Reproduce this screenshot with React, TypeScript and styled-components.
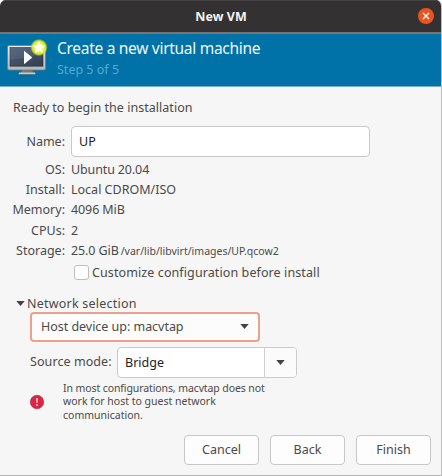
import React from "react";
import styled, { createGlobalStyle } from "styled-components";

const Global = createGlobalStyle`
  * { box-sizing: border-box; }
  body { margin: 0; background: #fff; overflow: hidden; }
`;

const Dialog = styled.main`
  width: 442px;
  height: 476px;
  display: flex;
  flex-direction: column;
  overflow: hidden;
  background: #f6f6f6;
  border-right: 1px solid #bdbdbd;
  border-bottom: 1px solid #b5b5b5;
  border-radius: 6px 6px 0 0;
  font: 12.5px/20px "Noto Sans", "Open Sans", sans-serif;
  color: #4a4a4a;
  white-space: nowrap;
`;

const Text = styled.span<{ $track?: number }>`
  letter-spacing: ${(p) => p.$track ?? 0}px;
`;

const TitleBar = styled.header`
  flex: none;
  width: 442px;
  height: 33px;
  display: grid;
  grid-template-columns: 34px 1fr 34px;
  align-items: center;
  background: #333132;
  border-top: 1px solid #454344;
  border-bottom: 1px solid #77706d;
`;

const Title = styled.h1`
  grid-column: 2;
  margin: 0;
  text-align: center;
  font-size: 12.5px;
  line-height: 20px;
  font-weight: 700;
  color: #f5f4f3;
`;

const Close = styled.button`
  width: 16px;
  height: 16px;
  margin: -2px 0 0 10px;
  padding: 0;
  border: 0;
  border-radius: 50%;
  background: #e95420;
  display: grid;
  place-items: center;
`;

const Banner = styled.section`
  flex: none;
  height: 54px;
  display: flex;
  padding: 6px 0 0 7px;
  gap: 10px;
  background: #0072a8;
  border-top: 1px solid #3b8db3;
  border-bottom: 1px solid #79acc7;
`;

const BannerText = styled.div`
  display: flex;
  flex-direction: column;
`;

const Heading = styled.h2`
  margin: -3px 0 0;
  font-size: 15.5px;
  line-height: 23px;
  font-weight: 400;
  color: #f0f7fa;
`;

const Step = styled.div`
  font-size: 12.5px;
  line-height: 20px;
  color: #55a9d4;
`;

const Body = styled.section`
  flex: 1;
  display: flex;
  flex-direction: column;
  padding: 11px 10px 10px 12px;
`;

const Intro = styled.div`
  padding-left: 1px;
`;

const Details = styled.div`
  display: grid;
  grid-template-columns: 53px 299px;
  column-gap: 6px;
  grid-template-rows: 31px 3px repeat(5, 20.2px);
  margin-top: 8px;
`;

const Key = styled.div<{ $tall?: boolean }>`
  display: flex;
  justify-content: flex-end;
  line-height: ${(p) => (p.$tall ? 31 : 20)}px;
  grid-column: 1;
`;

const Value = styled.div`
  grid-column: 2;
  display: flex;
  gap: 2px;
`;

const Small = styled.span`
  font-size: 10.5px;
`;

const Entry = styled.div`
  height: 31px;
  padding-left: 7px;
  line-height: 29px;
  background: #fff;
  border: 1px solid #c8c8c8;
  border-radius: 4px;
  color: #222;
`;

const Spacer = styled.div`
  grid-column: 1 / -1;
`;

const CheckRow = styled.label`
  display: flex;
  align-items: center;
  gap: 3px;
  height: 20px;
  margin: 2px 0 0 62px;
`;

const CheckBox = styled.span`
  width: 15px;
  height: 15px;
  border: 1px solid #bebebe;
  border-radius: 3px;
  background: #fff;
`;

const Disclosure = styled.div`
  display: flex;
  align-items: center;
  gap: 2px;
  height: 20px;
  margin: 11px 0 0 4px;
`;

const Combo = styled.div`
  display: flex;
  align-items: center;
  justify-content: space-between;
  width: 230px;
  height: 30px;
  margin: -2px 0 0 18px;
  padding: 0 9px;
  background: #fcfcfc;
  border: 2px solid #eba28b;
  border-radius: 4px;
`;

const SourceRow = styled.div`
  display: flex;
  align-items: center;
  justify-content: space-between;
  width: 267px;
  margin: 5px 0 0 18px;
`;

const SplitCombo = styled.div`
  display: flex;
  width: 180px;
  height: 31px;
  line-height: 29px;
  color: #222;
  background: #fff;
  border: 1px solid #cacaca;
  border-radius: 4px;
`;

const SplitText = styled.div`
  flex: 1;
  padding-left: 7px;
`;

const SplitArrow = styled.div`
  width: 32px;
  display: grid;
  place-items: center;
  border-left: 1px solid #d0d0d0;
  background: #fbfbfb;
  border-radius: 0 3px 3px 0;
`;

const Warning = styled.div`
  display: flex;
  align-items: center;
  gap: 19px;
  margin: 4px 0 0 18px;
  font-size: 10.5px;
  line-height: 13.4px;
`;

const WarningLines = styled.div`
  display: flex;
  flex-direction: column;
`;

const Actions = styled.footer`
  display: flex;
  justify-content: flex-end;
  gap: 11px;
  margin-top: auto;
`;

const Button = styled.button`
  width: 75px;
  height: 30px;
  padding: 0;
  font: inherit;
  color: inherit;
  border: 1px solid #c8c8c8;
  border-radius: 4px;
  background: #fdfdfd;
`;

const Arrow = () => (
  <svg width="9" height="5" viewBox="0 0 9 5">
    <path d="M.3 0h8.4L4.5 5z" fill="#424242" />
  </svg>
);

const MachineIcon = () => (
  <svg width="40" height="37" viewBox="0 0 40 37" overflow="visible">
    <defs>
      <linearGradient id="screen" x1="0" y1="0" x2="1" y2="1">
        <stop offset="0" stopColor="#526078" />
        <stop offset="1" stopColor="#303d51" />
      </linearGradient>
      <linearGradient id="frame" x1="0" y1="0" x2="0" y2="1">
        <stop offset="0" stopColor="#eeeeec" />
        <stop offset="1" stopColor="#b5b7b5" />
      </linearGradient>
      <radialGradient id="glow">
        <stop offset=".5" stopColor="#f3f84a" />
        <stop offset=".78" stopColor="#dcea20" stopOpacity=".9" />
        <stop offset="1" stopColor="#a4d030" stopOpacity="0" />
      </radialGradient>
    </defs>
    <ellipse cx="20" cy="34" rx="9.5" ry="2.2" fill="#315a72" />
    <path d="M15 30h10l1 3H14z" fill="#75797b" />
    <path d="M12 32.4h16l.6 1.8H11.4z" fill="#c9cbc9" />
    <rect x=".5" y="5.5" width="38" height="24.5" rx="1.5" fill="url(#frame)" stroke="#777c80" strokeWidth=".8" />
    <rect x="3" y="7.5" width="33" height="18.7" fill="url(#screen)" stroke="#27313e" strokeWidth=".6" />
    <path d="M3 7.5h33v6.7L3 20z" fill="#71809a" opacity=".25" />
    <path d="M17 10.7v13.5l8.3-6.7z" fill="#fff" />
    <circle cx="32" cy="7.5" r="8.8" fill="url(#glow)" />
    <path d="m32 1 1.8 4 4.4.5-3.3 3 1 4.5-3.9-2.3-3.9 2.3 1-4.5-3.3-3 4.4-.5z" fill="#fff" />
  </svg>
);

const facts = [
  { label: "OS:", value: "Ubuntu 20.04", track: -0.13 },
  { label: "Install:", value: "Local CDROM/ISO", track: 0 },
  { label: "Memory:", value: "4096 MiB", track: -0.1 },
  { label: "CPUs:", value: "2", track: 0 },
  { label: "Storage:", value: "25.0 GiB", track: -0.1, note: "/var/lib/libvirt/images/UP.qcow2" },
];

export default function App() {
  return (
    <>
      <Global />
      <Dialog>
        <TitleBar>
          <Title><Text $track={0.05}>New VM</Text></Title>
          <Close aria-label="Close">
            <svg width="8" height="8" viewBox="0 0 8 8">
              <path d="m1 1 6 6M7 1 1 7" stroke="#fff" strokeWidth="1.3" />
            </svg>
          </Close>
        </TitleBar>
        <Banner>
          <MachineIcon />
          <BannerText>
            <Heading><Text $track={-0.29}>Create a new virtual machine</Text></Heading>
            <Step><Text>Step 5 of 5</Text></Step>
          </BannerText>
        </Banner>
        <Body>
          <Intro><Text $track={0.03}>Ready to begin the installation</Text></Intro>
          <Details>
            <Key $tall><Text>Name:</Text></Key>
            <Entry>UP</Entry>
            <Spacer />
            {facts.map((f) => (
              <React.Fragment key={f.label}>
                <Key><Text>{f.label}</Text></Key>
                <Value>
                  <Text $track={f.track}>{f.value}</Text>
                  {f.note && <Small><Text>{f.note}</Text></Small>}
                </Value>
              </React.Fragment>
            ))}
          </Details>
          <CheckRow>
            <CheckBox />
            <Text $track={0.1}>Customize configuration before install</Text>
          </CheckRow>
          <Disclosure>
            <Arrow />
            <Text $track={0.22}>Network selection</Text>
          </Disclosure>
          <Combo>
            <Text $track={-0.03}>Host device up: macvtap</Text>
            <Arrow />
          </Combo>
          <SourceRow>
            <Text $track={0.08}>Source mode:</Text>
            <SplitCombo>
              <SplitText>Bridge</SplitText>
              <SplitArrow><Arrow /></SplitArrow>
            </SplitCombo>
          </SourceRow>
          <Warning>
            <svg width="14" height="14" viewBox="0 0 14 14">
              <circle cx="7" cy="7" r="6.7" fill="#df2342" stroke="#b91c3b" strokeWidth=".6" />
              <path d="M6 3h2l-.4 5H6.4zM6.1 9.3h1.8V11H6.1z" fill="#f7c3cb" />
            </svg>
            <WarningLines>
              <Text $track={-0.1}>In most configurations, macvtap does not</Text>
              <Text>work for host to guest network</Text>
              <Text>communication.</Text>
            </WarningLines>
          </Warning>
          <Actions>
            <Button>Cancel</Button>
            <Button>Back</Button>
            <Button>Finish</Button>
          </Actions>
        </Body>
      </Dialog>
    </>
  );
}
